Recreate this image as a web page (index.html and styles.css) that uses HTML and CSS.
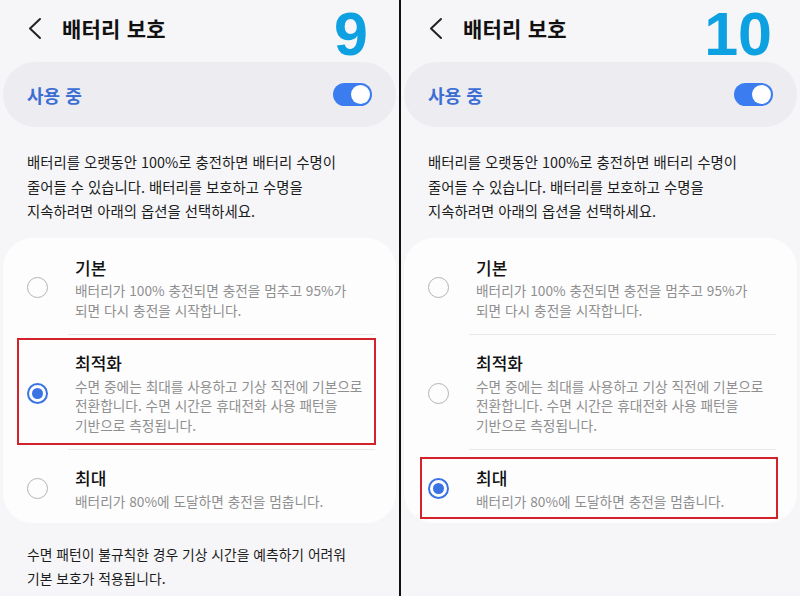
FILE: index.html
```html
<!DOCTYPE html>
<html lang="ko">
<head>
    <meta charset="UTF-8">
    <meta name="viewport" content="width=device-width, initial-scale=1.0">
    <title>배터리 보호</title>
    <link rel="stylesheet" href="styles.css">
</head>
<body>
    <div class="screen">
        <div class="panel">
            <div class="step step-9">9</div>
            <div class="header">
                <svg class="back" width="16" height="24" viewBox="0 0 16 24">
                    <polyline points="13,3 3,12.5 13,22" fill="none" stroke="#222" stroke-width="2" stroke-linecap="round" stroke-linejoin="round"/>
                </svg>
                <h1>배터리 보호</h1>
            </div>
            <div class="usage">
                <span>사용 중</span>
                <div class="switch"><div class="knob"></div></div>
            </div>
            <p class="desc">배터리를 오랫동안 100%로 충전하면 배터리 수명이<br>줄어들 수 있습니다. 배터리를 보호하고 수명을<br>지속하려면 아래의 옵션을 선택하세요.</p>
            <div class="options">
                <div class="option">
                    <div class="radio"></div>
                    <div class="text">
                        <div class="title">기본</div>
                        <div class="sub">배터리가 100% 충전되면 충전을 멈추고 95%가<br>되면 다시 충전을 시작합니다.</div>
                    </div>
                </div>
                <hr class="sep">
                <div class="option">
                    <div class="radio checked"></div>
                    <div class="text">
                        <div class="title">최적화</div>
                        <div class="sub">수면 중에는 최대를 사용하고 기상 직전에 기본으로<br>전환합니다. 수면 시간은 휴대전화 사용 패턴을<br>기반으로 측정됩니다.</div>
                    </div>
                    <div class="mark mark-left"></div>
                </div>
                <hr class="sep">
                <div class="option last">
                    <div class="radio"></div>
                    <div class="text">
                        <div class="title">최대</div>
                        <div class="sub">배터리가 80%에 도달하면 충전을 멈춥니다.</div>
                    </div>
                </div>
            </div>
            <p class="note">수면 패턴이 불규칙한 경우 기상 시간을 예측하기 어려워<br>기본 보호가 적용됩니다.</p>
        </div>

        <div class="divider"></div>

        <div class="panel">
            <div class="step step-10">10</div>
            <div class="header">
                <svg class="back" width="16" height="24" viewBox="0 0 16 24">
                    <polyline points="13,3 3,12.5 13,22" fill="none" stroke="#222" stroke-width="2" stroke-linecap="round" stroke-linejoin="round"/>
                </svg>
                <h1>배터리 보호</h1>
            </div>
            <div class="usage">
                <span>사용 중</span>
                <div class="switch"><div class="knob"></div></div>
            </div>
            <p class="desc">배터리를 오랫동안 100%로 충전하면 배터리 수명이<br>줄어들 수 있습니다. 배터리를 보호하고 수명을<br>지속하려면 아래의 옵션을 선택하세요.</p>
            <div class="options">
                <div class="option">
                    <div class="radio"></div>
                    <div class="text">
                        <div class="title">기본</div>
                        <div class="sub">배터리가 100% 충전되면 충전을 멈추고 95%가<br>되면 다시 충전을 시작합니다.</div>
                    </div>
                </div>
                <hr class="sep">
                <div class="option">
                    <div class="radio"></div>
                    <div class="text">
                        <div class="title">최적화</div>
                        <div class="sub">수면 중에는 최대를 사용하고 기상 직전에 기본으로<br>전환합니다. 수면 시간은 휴대전화 사용 패턴을<br>기반으로 측정됩니다.</div>
                    </div>
                </div>
                <hr class="sep">
                <div class="option last">
                    <div class="radio checked"></div>
                    <div class="text">
                        <div class="title">최대</div>
                        <div class="sub">배터리가 80%에 도달하면 충전을 멈춥니다.</div>
                    </div>
                    <div class="mark mark-right"></div>
                </div>
            </div>
        </div>
    </div>
</body>
</html>
```

FILE: styles.css
```css
* {
    box-sizing: border-box;
}

body {
    margin: 0;
    background-color: #f6f6f9;
    color: #1c1c1c;
    font-family: 'Noto Sans CJK KR', 'Noto Sans', sans-serif;
}

.screen {
    display: flex;
    width: 800px;
    height: 596px;
    overflow: hidden;
}

.panel {
    position: relative;
    width: 399px;
    padding: 0 3px;
    background-color: #f6f6f9;
}

.divider {
    width: 2px;
    background-color: #111;
}

.step {
    position: absolute;
    top: 0;
    font-family: 'Liberation Sans', Arial, sans-serif;
    font-size: 61px;
    font-weight: bold;
    line-height: 1.12;
    color: #0da1e2;
}

.step-9 {
    right: 31px;
}

.step-10 {
    right: 28px;
}

.header {
    display: flex;
    align-items: center;
    height: 56px;
    padding-left: 24px;
}

.back {
    display: block;
    margin-right: 19px;
}

h1 {
    margin: 0;
    font-size: 21px;
    font-weight: bold;
    color: #111;
    letter-spacing: 0.2px;
}

.usage {
    display: flex;
    align-items: center;
    justify-content: space-between;
    height: 65px;
    margin-top: 6px;
    padding: 0 24px;
    border-radius: 33px;
    background-color: #ececf1;
}

.usage span {
    font-size: 18px;
    font-weight: bold;
    color: #3d6ed4;
}

.switch {
    width: 39px;
    height: 23px;
    padding: 2px;
    border-radius: 12px;
    background-color: #3b7cf1;
}

.knob {
    width: 19px;
    height: 19px;
    margin-left: auto;
    border-radius: 50%;
    background-color: #fff;
}

.desc {
    margin: 23px 0 0 24px;
    font-size: 14.4px;
    line-height: 24.5px;
}

.options {
    margin-top: 14px;
    padding: 2px 0 0;
    border-radius: 30px;
    background-color: #fdfdfe;
}

.option {
    position: relative;
    display: flex;
    align-items: center;
    padding: 16px 0 14px 24px;
}

.option.last {
    padding-bottom: 12px;
}

.radio {
    flex: none;
    width: 21px;
    height: 21px;
    margin-right: 27px;
    border: 1.5px solid #b3b3b3;
    border-radius: 50%;
}

.radio.checked {
    border: 2px solid #3a73e4;
    padding: 3px;
}

.radio.checked::after {
    content: "";
    display: block;
    width: 11px;
    height: 11px;
    border-radius: 50%;
    background-color: #3a73e4;
}

.title {
    font-size: 17px;
    font-weight: 500;
    line-height: 24px;
    color: #111;
}

.sub {
    margin-top: 1.5px;
    font-size: 13.7px;
    line-height: 19.5px;
    color: #8f8f8f;
    white-space: nowrap;
}

.sep {
    height: 1px;
    margin: 0 21px 0 65px;
    border: none;
    background-color: #e9e9ec;
}

.mark {
    position: absolute;
    border: 2px solid #d3222b;
}

.mark-left {
    top: 3px;
    bottom: 4px;
    left: 14px;
    right: 20px;
}

.mark-right {
    top: 7px;
    bottom: 4px;
    left: 16px;
    right: 19px;
}

.note {
    margin: 20px 0 0 24px;
    font-size: 13.8px;
    line-height: 23.5px;
}
```
